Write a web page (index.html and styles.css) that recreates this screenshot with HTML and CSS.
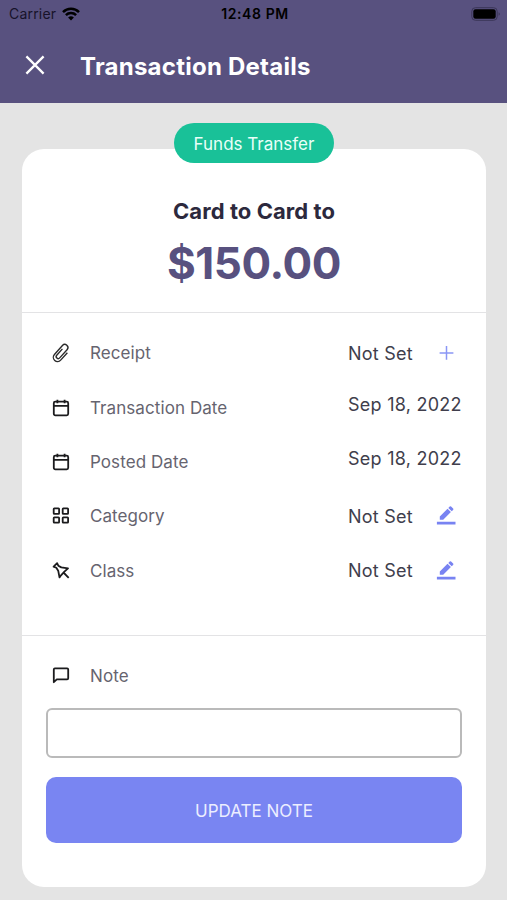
FILE: index.html
```html
<!DOCTYPE html>
<html lang="en">
<head>
  <meta charset="UTF-8">
  <meta name="viewport" content="width=device-width, initial-scale=1.0">
  <title>Transaction Details</title>
  <link rel="stylesheet" href="styles.css">
</head>
<body>
  <header class="header">
    <div class="status">
      <div class="carrier">
        <span>Carrier</span>
        <svg width="18" height="14" viewBox="0 0 18 14" fill="none" stroke="#000" stroke-width="2.5">
          <path d="M1 5.1a11.3 11.3 0 0 1 16 0"/>
          <path d="M3.9 8.1a7.2 7.2 0 0 1 10.2 0"/>
          <path d="M9 13.6l-2.9-3a4.1 4.1 0 0 1 5.8 0z" fill="#000" stroke="none"/>
        </svg>
      </div>
      <span class="clock">12:48 PM</span>
      <svg class="battery" width="30" height="14" viewBox="0 0 30 14">
        <rect x=".8" y=".7" width="25.4" height="12.6" rx="3.6" fill="none" stroke="#3b3658" stroke-width="1"/>
        <rect x="2.3" y="2.2" width="22.4" height="9.6" rx="2.2"/>
        <path d="M27.6 5.2c1.6.6 1.6 3 0 3.6z" fill="#3b3658"/>
      </svg>
    </div>
    <div class="title-bar">
      <svg width="20" height="20" viewBox="0 0 20 20" stroke="#fff" stroke-width="2.3">
        <path d="M1.4 1.4l17.2 17.2M18.6 1.4L1.4 18.6"/>
      </svg>
      <h1>Transaction Details</h1>
    </div>
  </header>

  <main class="card">
    <span class="badge">Funds Transfer</span>
    <section class="summary">
      <h2>Card to Card to</h2>
      <p class="amount">$150.00</p>
    </section>

    <section class="details">
      <div class="row">
        <svg class="icon clip" viewBox="0 0 18 18">
          <path transform="rotate(42 9 9)" d="M13.500 4.500V14.500a4.200 4.200 0 0 1-8.400 0V2.500a3.100 3.100 0 0 1 6.200 0v11a2 2 0 0 1-4 0V5"/>
        </svg>
        <span class="label">Receipt</span>
        <span class="value">Not Set</span>
        <svg class="action" viewBox="0 0 20 20" stroke="#8a96f5" stroke-width="1.5">
          <path d="M10.500 3v13.800M3.600 9.900h13.800"/>
        </svg>
      </div>
      <div class="row">
        <svg class="icon" viewBox="0 0 18 18">
          <rect x="1.800" y="2.700" width="14.400" height="13.600" rx="1.500"/>
          <path d="M1.800 6.900h14.400M5.400 .7v3.500M12.600 .7v3.500"/>
        </svg>
        <span class="label">Transaction Date</span>
        <span class="value date">Sep 18, 2022</span>
      </div>
      <div class="row">
        <svg class="icon" viewBox="0 0 18 18">
          <rect x="1.800" y="2.700" width="14.400" height="13.600" rx="1.500"/>
          <path d="M1.800 6.900h14.400M5.400 .7v3.500M12.600 .7v3.500"/>
        </svg>
        <span class="label">Posted Date</span>
        <span class="value date">Sep 18, 2022</span>
      </div>
      <div class="row">
        <svg class="icon" viewBox="0 0 18 18">
          <rect x="1.700" y="1.400" width="5.400" height="5.400" rx=".6"/>
          <rect x="10.700" y="1.400" width="5.400" height="5.400" rx=".6"/>
          <rect x="1.700" y="10.300" width="5.400" height="5.400" rx=".6"/>
          <rect x="10.700" y="10.300" width="5.400" height="5.400" rx=".6"/>
        </svg>
        <span class="label">Category</span>
        <span class="value">Not Set</span>
        <svg class="action" viewBox="0 0 20 20" fill="#7883f2">
          <path d="M3.800 13.800v-3.400l7.700-7.700 3.400 3.400-7.700 7.700zM12.300 1.900l1.400-1.400q.7-.6 1.400 0l2 2q.6.700 0 1.400l-1.400 1.400zM.9 15.700h18.600v2.900H.9z"/>
        </svg>
      </div>
      <div class="row">
        <svg class="icon" viewBox="0 0 18 18">
          <path d="M1.600 4.600L5.100 1.200l1.200 2.500 3 1.700 6.700.9-3.600 3.300-3.400 3.700-1.500 2.100-1.300-6.700-1.900-2.900zM11 10l5.700 5.900"/>
        </svg>
        <span class="label">Class</span>
        <span class="value">Not Set</span>
        <svg class="action" viewBox="0 0 20 20" fill="#7883f2">
          <path d="M3.800 13.800v-3.400l7.700-7.700 3.400 3.400-7.700 7.700zM12.300 1.900l1.400-1.400q.7-.6 1.400 0l2 2q.6.700 0 1.400l-1.400 1.400zM.9 15.700h18.600v2.900H.9z"/>
        </svg>
      </div>
    </section>

    <section class="note">
      <div class="row">
        <svg class="icon" viewBox="0 0 18 18">
          <path d="M1.800 15.200V2.400q0-1.100 1.100-1.100h12.200q1.100 0 1.100 1.100v8.900q0 1.100-1.100 1.100H4.800z"/>
        </svg>
        <span class="label">Note</span>
      </div>
      <input class="note-input" type="text" aria-label="Note">
      <button class="update">UPDATE NOTE</button>
    </section>
  </main>
</body>
</html>
```

FILE: styles.css
```css
* {
  box-sizing: border-box;
}
body {
  margin: 0;
  min-height: 900px;
  background: #e4e4e4;
  font-family: Inter, "Liberation Sans", sans-serif;
}
h1, h2, p {
  margin: 0;
}
svg {
  display: block;
  flex: none;
}
.header {
  height: 103px;
  background: #58517f;
}
.status {
  display: grid;
  grid-template-columns: 1fr auto 1fr;
  align-items: center;
  height: 27px;
  padding: 0 6px 0 9px;
  font-size: 14px;
  color: #17132a;
}
.carrier {
  display: flex;
  align-items: center;
  gap: 6px;
  letter-spacing: .2px;
}
.clock {
  font-weight: 600;
  letter-spacing: .6px;
  color: #000;
}
.battery {
  justify-self: end;
}
.title-bar {
  display: flex;
  align-items: center;
  gap: 35px;
  height: 76px;
}
.title-bar {
  padding: 0 25px;
}
.title-bar h1 {
  padding-top: 3px;
  font-size: 24px;
  line-height: 30px;
  letter-spacing: .24px;
  color: #fff;
}
.card {
  position: relative;
  width: 464px;
  height: 738px;
  margin: 46px 0 0 22px;
  background: #fff;
  border-radius: 22px;
}
.badge {
  position: absolute;
  top: -26px;
  left: 152px;
  width: 160px;
  height: 40px;
  border-radius: 20px;
  background: #19c198;
  color: #e9fff8;
  font-size: 17px;
  line-height: 42px;
  text-align: center;
}
.summary {
  height: 164px;
  padding-top: 47px;
  border-bottom: 1px solid #e3e3e5;
  text-align: center;
}
.summary h2 {
  font-size: 22px;
  line-height: 30px;
  letter-spacing: .07px;
  color: #2c293d;
}
.amount {
  padding-top: 9px;
  font-size: 44px;
  line-height: 56px;
  font-weight: 700;
  letter-spacing: -.4px;
  color: #58517f;
}
.details {
  height: 323px;
  padding: 13px 25px 0 30px;
  border-bottom: 1px solid #e3e3e5;
}
.row {
  display: flex;
  align-items: center;
  height: 54.4px;
}
.icon {
  width: 18px;
  height: 18px;
  margin-right: 20px;
  fill: none;
  stroke: #1b1b1d;
  stroke-width: 1.8;
  stroke-linejoin: round;
}
.clip {
  stroke: #2b2b2b;
  stroke-width: 1.4;
  overflow: visible;
}
.label {
  flex: 1;
  font-size: 17px;
  letter-spacing: .08px;
  color: #66646f;
}
.value {
  width: 113px;
  font-size: 18px;
  letter-spacing: .25px;
  color: #403e4c;
  white-space: nowrap;
}
.date {
  padding-bottom: 7px;
}
.action {
  width: 20px;
  height: 20px;
  margin-left: -25px;
  margin-right: 5px;
}
.note {
  padding: 13px 24px 0;
}
.note .row {
  padding-left: 6px;
}
.note-input {
  display: block;
  width: 416px;
  height: 50px;
  margin-top: 5px;
  padding: 0 12px;
  border: 2px solid #bababa;
  border-radius: 6px;
  background: #fff;
  font: inherit;
}
.update {
  display: block;
  width: 416px;
  height: 66px;
  margin-top: 19px;
  padding: 2px 0 0;
  border: 0;
  border-radius: 10px;
  background: #7985f2;
  color: #eceeff;
  font-family: inherit;
  font-size: 17px;
}
```
